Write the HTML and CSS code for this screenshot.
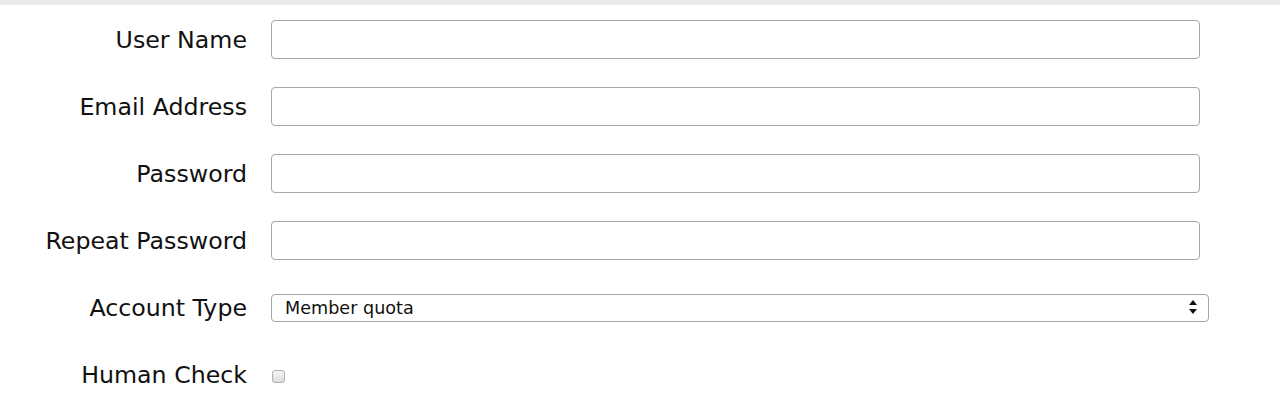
FILE: index.html
```html
<!DOCTYPE html>
<html>
<head>
<meta charset="utf-8">
<link rel="stylesheet" href="styles.css">
</head>
<body>
<div class="topbar"></div>
<form class="form">
  <div class="row">
    <label class="label">User Name</label>
    <input class="field" type="text">
  </div>
  <div class="row">
    <label class="label">Email Address</label>
    <input class="field" type="text">
  </div>
  <div class="row">
    <label class="label">Password</label>
    <input class="field" type="password">
  </div>
  <div class="row">
    <label class="label">Repeat Password</label>
    <input class="field" type="password">
  </div>
  <div class="row">
    <label class="label">Account Type</label>
    <div class="select-wrap">
      <select class="select">
        <option>Member quota</option>
      </select>
      <svg class="arrows" width="8" height="15" viewBox="0 0 8 15">
        <path d="M4 0 L8 5 L0 5 Z" fill="#111"/>
        <path d="M0 9 L8 9 L4 14 Z" fill="#111"/>
      </svg>
    </div>
  </div>
  <div class="row">
    <label class="label">Human Check</label>
    <input class="check" type="checkbox">
  </div>
</form>
</body>
</html>
```
FILE: styles.css
```css
html, body {
  margin: 0;
  padding: 0;
  background: #fff;
}
body {
  font-family: "DejaVu Sans", Verdana, sans-serif;
  color: #111;
}
.topbar {
  height: 5px;
  background: #ebebeb;
}
.form {
  display: flex;
  flex-direction: column;
  gap: 28px;
  padding-top: 15px;
}
.row {
  display: flex;
  align-items: center;
  height: 39px;
  gap: 24px;
}
.label {
  width: 247px;
  text-align: right;
  font-size: 23.7px;
  line-height: 39px;
  padding-top: 2px;
  flex: none;
}
.field {
  box-sizing: border-box;
  width: 929px;
  height: 39px;
  margin: 0;
  border: 1px solid #a6a6a6;
  border-radius: 4px;
  background: #fff;
  padding: 0 8px;
  font-size: 16px;
  font-family: inherit;
  outline: none;
}
.select-wrap {
  position: relative;
  width: 938px;
  height: 28px;
}
.select {
  -webkit-appearance: none;
  appearance: none;
  box-sizing: border-box;
  width: 100%;
  height: 28px;
  margin: 0;
  border: 1px solid #a6a6a6;
  border-radius: 4px;
  background: #fff;
  padding: 0 0 0 13px;
  font-family: "DejaVu Sans", Verdana, sans-serif;
  font-size: 17.6px;
  color: #111;
}
.arrows {
  position: absolute;
  right: 12px;
  top: 6px;
  pointer-events: none;
}
.check {
  -webkit-appearance: none;
  appearance: none;
  box-sizing: border-box;
  width: 13px;
  height: 13px;
  margin: 4px 0 0 1px;
  border: 1px solid #b0b0b0;
  border-radius: 3px;
  background: linear-gradient(#f4f4f4, #dedede);
}
```
